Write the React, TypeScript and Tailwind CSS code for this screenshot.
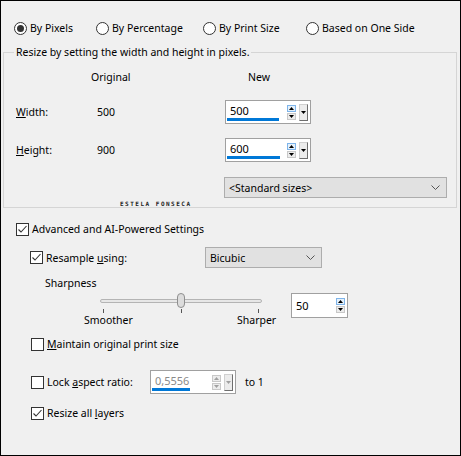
import React from 'react';

function Tri({ up, color = '#000' }: { up?: boolean; color?: string }) {
  return (
    <svg width="5" height="3" viewBox="0 0 5 3">
      <path d={up ? 'M0 3 L2.5 0 L5 3 Z' : 'M0 0 L5 0 L2.5 3 Z'} fill={color} />
    </svg>
  );
}

function Chevron() {
  return (
    <svg width="9" height="5" viewBox="0 0 9 5">
      <path d="M0.5 0.5 L4.5 4.5 L8.5 0.5" fill="none" stroke="#555" strokeWidth="1" />
    </svg>
  );
}

function Checkbox({ checked }: { checked?: boolean }) {
  return (
    <span className="flex h-[13px] w-[13px] shrink-0 items-center justify-center border border-[#333] bg-white">
      {checked && (
        <svg width="11" height="11" viewBox="0 0 11 11">
          <path d="M1.5 5.5 L4 8 L9.5 2" fill="none" stroke="#333" strokeWidth="1.1" />
        </svg>
      )}
    </span>
  );
}

function Radio({ label, selected, w }: { label: string; selected?: boolean; w: string }) {
  return (
    <div className={`flex items-center gap-[3px] ${w}`}>
      <span className="flex h-[13px] w-[13px] shrink-0 items-center justify-center rounded-full border border-[#333] bg-white">
        {selected && <span className="h-[7px] w-[7px] rounded-full bg-[#333]" />}
      </span>
      <span>{label}</span>
    </div>
  );
}

function SpinStack({ disabled, hover }: { disabled?: boolean; hover?: boolean }) {
  const c = disabled ? '#a0a0a0' : '#000';
  return (
    <div className="flex flex-col gap-[1px]">
      <span className={`flex h-[7px] w-[9px] items-center justify-center border ${hover ? 'border-[#7eb4ea] bg-[#e5f1fb]' : 'border-[#c8c8c8] bg-[#ececec]'}`}>
        <Tri up color={c} />
      </span>
      <span className="flex h-[7px] w-[9px] items-center justify-center border border-[#c8c8c8] bg-[#ececec]">
        <Tri color={c} />
      </span>
    </div>
  );
}

function SizeInput({ value, bar, disabled }: { value: string; bar: string; disabled?: boolean }) {
  return (
    <div className="relative flex h-[24px] w-[86px] items-center border border-[#a0a0a0] bg-white pl-[4px]">
      <span className={`w-[57px] pb-[3px] text-[11px] ${disabled ? 'text-[#8a8a8a]' : 'text-black'}`}>{value}</span>
      <SpinStack hover={!disabled} disabled={disabled} />
      <span className="ml-[3px] flex h-[17px] w-[9px] items-center justify-center border border-[#d0d0d0] border-r-[#6e6e6e] border-b-[#6e6e6e] bg-[#ececec]">
        <Tri color={disabled ? '#a0a0a0' : '#000'} />
      </span>
      <span className={`absolute bottom-[2px] left-[1px] h-[3px] bg-[#0078d7] ${bar}`} />
    </div>
  );
}

function Dropdown({ label, w }: { label: string; w: string }) {
  return (
    <div className={`flex h-[21px] items-center justify-between border border-[#adadad] bg-[#e1e1e1] pl-[4px] pr-[6px] ${w}`}>
      <span className="text-[10.5px]">{label}</span>
      <Chevron />
    </div>
  );
}

export default function App() {
  return (
    <div className="h-[456px] w-[461px] overflow-hidden border border-black bg-[#f0f0f0] font-['Noto_Sans',sans-serif] text-[10.5px] leading-[16px] text-black">
      {/* Resize mode */}
      <div className="mt-[19px] flex h-[16px] items-center pl-[13px]">
        <Radio label="By Pixels" selected w="w-[82px]" />
        <Radio label="By Percentage" w="w-[107px]" />
        <Radio label="By Print Size" w="w-[103px]" />
        <Radio label="Based on One Side" w="w-auto" />
      </div>

      <fieldset className="mt-[8px] ml-[2px] w-[454px] border border-[#d5d5d5] pl-[10px]">
        <legend className="px-[2px]">Resize by setting the width and height in pixels.</legend>

        <div className="mt-[9px] flex h-[16px]">
          <span className="ml-[77px] w-[157px]">Original</span>
          <span>New</span>
        </div>

        <div className="mt-[15px] flex items-center">
          <span className="ml-[2px] w-[81px]"><u>W</u>idth:</span>
          <span className="w-[128px]">500</span>
          <SizeInput value="500" bar="w-[52px]" />
        </div>

        <div className="mt-[14px] flex items-center">
          <span className="ml-[2px] w-[81px]"><u>H</u>eight:</span>
          <span className="w-[128px]">900</span>
          <SizeInput value="600" bar="w-[53px]" />
        </div>

        <div className="mt-[15px] flex">
          <div className="ml-[210px]">
            <Dropdown label="<Standard sizes>" w="w-[223px]" />
          </div>
        </div>

        {/* watermark */}
        <div className="mt-[3px] ml-[106px] h-[6px] font-['DejaVu_Sans_Mono',monospace] text-[6px] leading-[6px] font-bold tracking-[1.5px] whitespace-nowrap text-[#222]">
          ESTELA FONSECA
        </div>
      </fieldset>

      <div className="mt-[13px] flex h-[16px] items-center gap-[3px] pl-[15px]">
        <Checkbox checked />
        <span>Advanced and AI-Powered Settings</span>
      </div>

      <div className="mt-[10px] flex h-[21px] items-center pl-[29px]">
        <div className="flex w-[175px] items-center gap-[3px]">
          <Checkbox checked />
          <span>Resample <u>u</u>sing:</span>
        </div>
        <Dropdown label="Bicubic" w="w-[117px]" />
      </div>

      <div className="mt-[7px] h-[16px] pl-[44px]">Sharpness</div>

      <div className="mt-[2px] flex items-start">
        <div className="ml-[95px] w-[170px]">
          <div className="relative h-[16px]">
            <div className="absolute top-[6px] right-[4px] left-[4px] h-[4px] rounded-full border border-[#b4b4b4] bg-[#e7e7e7]" />
            <div className="absolute top-0 left-[81px] h-[15px] w-[8px] rounded-full border border-[#8f8f8f] bg-[#dcdcdc]" />
          </div>
          <div className="flex h-[5px] justify-between px-[7px]">
            <span className="h-[4px] w-[1px] bg-[#555]" />
            <span className="h-[4px] w-[1px] bg-[#555]" />
            <span className="h-[4px] w-[1px] bg-[#555]" />
          </div>
        </div>
        <div className="ml-[25px] flex h-[25px] w-[57px] items-center justify-between border border-[#a0a0a0] bg-white pr-[2px] pl-[4px]">
          <span className="text-[11px]">50</span>
          <SpinStack hover />
        </div>
      </div>

      <div className="-mt-[6px] flex h-[16px]">
        <span className="ml-[83px] w-[153px]">Smoother</span>
        <span>Sharper</span>
      </div>

      <div className="mt-[8px] flex h-[16px] items-center gap-[3px] pl-[30px]">
        <Checkbox />
        <span><u>M</u>aintain original print size</span>
      </div>

      <div className="mt-[18px] flex h-[24px] items-center pl-[30px]">
        <div className="flex w-[119px] items-center gap-[3px]">
          <Checkbox />
          <span>Lock <u>a</u>spect ratio:</span>
        </div>
        <SizeInput value="0,5556" bar="w-[38px]" disabled />
        <span className="ml-[9px]">to 1</span>
      </div>

      <div className="mt-[11px] flex h-[16px] items-center gap-[3px] pl-[30px]">
        <Checkbox checked />
        <span>Resize all <u>l</u>ayers</span>
      </div>
    </div>
  );
}
